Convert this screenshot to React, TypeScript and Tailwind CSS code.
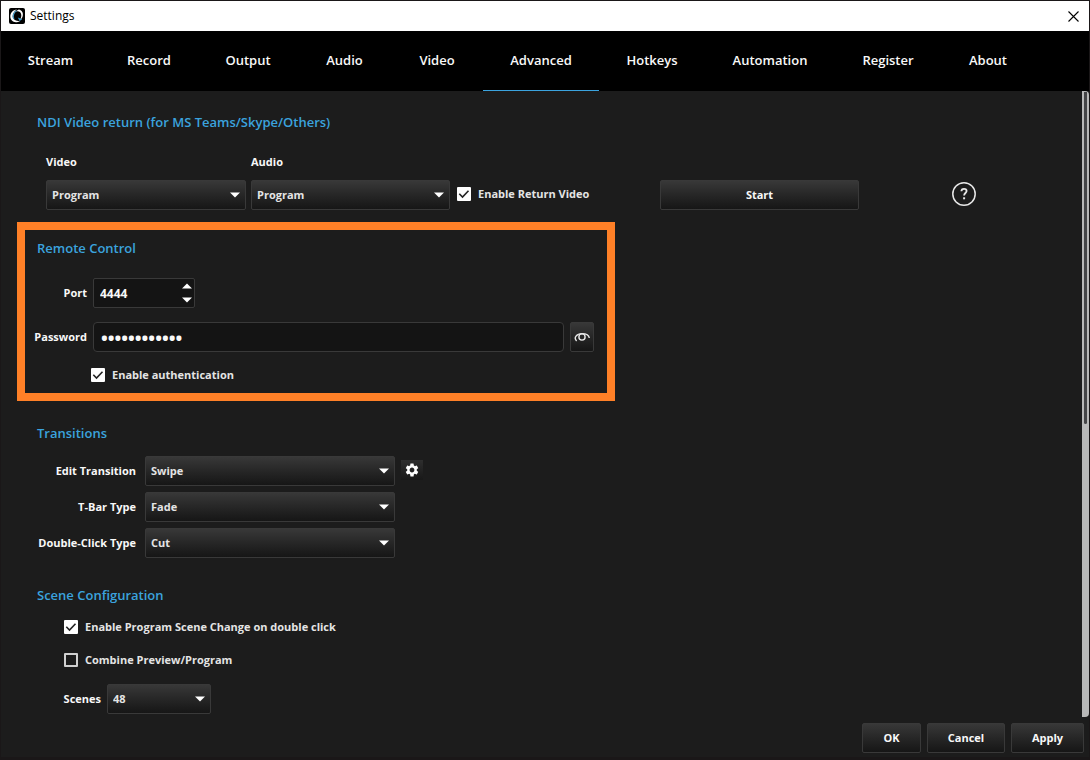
import { useState, type ReactNode } from 'react';
import { clsx } from 'clsx';

const TABS = [
  { name: 'Stream', width: 'w-[99px]' },
  { name: 'Record', width: 'w-[98px]' },
  { name: 'Output', width: 'w-[100px]' },
  { name: 'Audio', width: 'w-[93px]' },
  { name: 'Video', width: 'w-[92px]' },
  { name: 'Advanced', width: 'w-[116px]' },
  { name: 'Hotkeys', width: 'w-[106px]' },
  { name: 'Automation', width: 'w-[130px]' },
  { name: 'Register', width: 'w-[106px]' },
  { name: 'About', width: 'w-[94px]' },
];

const SOURCES = ['Program', 'Preview', 'Multiview'];
const TRANSITIONS = ['Cut', 'Fade', 'Swipe', 'Slide', 'Stinger'];

const RAISED =
  'rounded-xs border border-[#393939] bg-linear-to-b from-[#383838] to-[#161616] hover:border-[#555555]';

export default function App() {
  const [tab, setTab] = useState('Advanced');

  return (
    <div className="flex min-h-screen flex-col border border-b-3 border-[#1a1718] bg-[#1c1c1c] font-['Open_Sans',sans-serif] text-[11px] leading-4 font-bold text-[#f8f8f8]">
      <TitleBar />

      <nav className="flex h-15 bg-black" role="tablist">
        {TABS.map(({ name, width }) => (
          <button
            key={name}
            type="button"
            role="tab"
            aria-selected={tab === name}
            onClick={() => setTab(name)}
            className={clsx(
              'border-b pb-0.5 text-[13px] font-semibold',
              width,
              tab === name ? 'border-[#3ba3de]' : 'border-transparent'
            )}
          >
            {name}
          </button>
        ))}
      </nav>

      <div className="flex flex-1">
        <main className="flex-1 pl-4">
          <VideoReturn />
          <RemoteControl />
          <Transitions />
          <SceneConfiguration />
        </main>

        {/* Scrollbar */}
        <div className="flex w-[7px] flex-col items-center rounded-r bg-[#b8b8b8] pt-px">
          <div className="h-[332px] w-[3px] rounded-b-xs bg-[#444446]" />
        </div>
      </div>

      <footer className="flex justify-end gap-1.5 pt-1.5 pr-[5px] pb-1">
        <PushButton className="w-[59px]">OK</PushButton>
        <PushButton className="w-[78px]">Cancel</PushButton>
        <PushButton className="w-[73px]">Apply</PushButton>
      </footer>
    </div>
  );
}

function TitleBar() {
  return (
    <header className="flex h-[30px] items-center bg-white pr-2.5 pl-2 text-black">
      <svg viewBox="0 0 16 16" className="size-4" aria-hidden="true">
        <rect width="16" height="16" rx="2" fill="#000" />
        <path
          d="M9.800 1.500C13 2.200 14.600 5 13.700 8.200c-.5 1.800-1.500 3-2.900 3.900 1.100-2 1.900-4 1.300-6.200C11.500 3.600 9.300 2.700 7 3.600 8 2.600 8.900 1.900 9.800 1.500z"
          fill="#fff"
        />
        <path
          d="M8 1.500C4 1.700 1.200 4.800 1.300 8.600c.1 3.600 3 6.200 6.700 5.600 1.200-.2 2.200-.6 3.100-1.300-3 .4-5.600-.3-6.800-2.600C2.900 7.400 4.600 3.600 8 1.500z"
          fill="#fff"
        />
        <path d="M7.600 2.700C4.600 4.300 3.300 7.800 4.900 10.900" fill="none" stroke="#4c9cc4" strokeWidth="1.300" />
        <path d="M8.800 9.600l4.400 1.600-2.600 1.900z" fill="#3b9fd6" />
      </svg>
      <h1 className="ml-[5px] flex-1 text-xs font-normal">Settings</h1>
      <button type="button" aria-label="Close">
        <svg viewBox="0 0 11 11" className="size-[11px]" stroke="#000" strokeWidth="1.100">
          <path d="M.5.5l10 10M10.500.5l-10 10" />
        </svg>
      </button>
    </header>
  );
}

function VideoReturn() {
  return (
    <section className="pt-[21px] pl-5">
      <SectionTitle>NDI Video return (for MS Teams/Skype/Others)</SectionTitle>
      <div className="mt-5 flex items-end pl-[9px]">
        <div className="flex flex-col gap-2">
          <label htmlFor="return-video" className="leading-5">Video</label>
          <Select id="return-video" value="Program" options={SOURCES} className="w-[200px]" />
        </div>
        <div className="ml-[5px] flex flex-col gap-2">
          <label htmlFor="return-audio" className="leading-5">Audio</label>
          <Select id="return-audio" value="Program" options={SOURCES} className="w-[199px]" />
        </div>
        <div className="ml-[7px] flex h-8 w-[203px] items-center">
          <CheckBox id="return-enabled" defaultChecked>Enable Return Video</CheckBox>
        </div>
        <PushButton className="w-[199px]">Start</PushButton>
        <button type="button" aria-label="Help" className="mb-1 ml-[93px]">
          <svg viewBox="0 0 24 24" className="size-6" fill="none" stroke="#e8e8e8">
            <circle cx="12" cy="12" r="11.200" strokeWidth="1.500" />
            <path
              d="M9.400 9.300c0-1.500 1.100-2.500 2.600-2.500s2.600.9 2.600 2.300c0 1.900-2.500 2-2.500 4.400"
              strokeWidth="1.800"
            />
            <path d="M12.100 15.300v2" strokeWidth="2" />
          </svg>
        </button>
      </div>
    </section>
  );
}

function RemoteControl() {
  const [port, setPort] = useState(4444);
  const [visible, setVisible] = useState(false);

  return (
    <section className="mt-3 w-[598px] border-8 border-[#ff8027] pt-2 pb-2">
      <div className="pl-3">
        <SectionTitle>Remote Control</SectionTitle>
      </div>

      <div className="mt-5 flex items-center gap-1.5">
        <label htmlFor="port" className="w-[62px] text-right">Port</label>
        <div className="flex h-[30px] w-[102px] rounded-xs border border-[#393939] bg-[#141414]">
          <input
            id="port"
            inputMode="numeric"
            value={port}
            onChange={(e) => setPort(Number(e.target.value) || 0)}
            className="min-w-0 flex-1 pt-0.5 pl-1.5 text-xs outline-none"
          />
          <div className="flex flex-col justify-between px-0.5 py-1">
            <button type="button" aria-label="Increase port" onClick={() => setPort(port + 1)}>
              <Arrow className="rotate-180" />
            </button>
            <button type="button" aria-label="Decrease port" onClick={() => setPort(port - 1)}>
              <Arrow />
            </button>
          </div>
        </div>
      </div>

      <div className="mt-3.5 flex items-center gap-1.5">
        <label htmlFor="password" className="w-[62px] text-right">Password</label>
        <input
          id="password"
          type={visible ? 'text' : 'password'}
          defaultValue="vt-remote-01"
          className="h-[30px] w-[471px] rounded border border-[#393939] bg-[#141414] px-[7px] pt-0.5 text-lg outline-none"
        />
        <button
          type="button"
          aria-label="Show password"
          onClick={() => setVisible(!visible)}
          className={clsx('flex h-[30px] w-6 items-center justify-center', RAISED)}
        >
          <svg viewBox="0 0 16 10" className="h-2.5 w-4 shrink-0" fill="none" stroke="#e8e8e8" strokeWidth="1.400">
            <path d="M2.600 8.900C-.6 6 2.500 1.600 8 1.600c4.200 0 7 2 7.300 4.400" />
            <circle cx="8" cy="5" r="3.100" />
          </svg>
        </button>
      </div>

      <div className="mt-[13px] flex h-5 items-center pl-[66px]">
        <CheckBox id="auth" defaultChecked>Enable authentication</CheckBox>
      </div>
    </section>
  );
}

function Transitions() {
  return (
    <section className="pt-[22px] pl-5">
      <SectionTitle>Transitions</SectionTitle>
      <div className="mt-[13px] flex flex-col gap-1.5">
        <div className="flex">
          <TransitionRow id="edit" label="Edit Transition" value="Swipe" />
          <button
            type="button"
            aria-label="Transition settings"
            className="mt-1 ml-1.5 flex h-5 w-[22px] items-center justify-center bg-linear-to-b from-[#2e2e2e] to-[#181818]"
          >
            <svg viewBox="0 0 24 24" className="size-4" fill="#ffffff">
              <path d="M19.140 12.940c.04-.3.060-.61.060-.94 0-.32-.02-.64-.07-.94l2.030-1.580a.49.49 0 0 0 .12-.61l-1.920-3.320a.488.488 0 0 0-.59-.22l-2.390.96c-.5-.38-1.030-.7-1.620-.94l-.36-2.540a.484.484 0 0 0-.48-.41h-3.840c-.24 0-.43.17-.47.41l-.36 2.540c-.59.24-1.130.57-1.620.94l-2.390-.96c-.22-.08-.47 0-.59.22L2.740 8.870c-.12.21-.08.47.12.61l2.030 1.580c-.05.3-.09.63-.09.94s.02.64.07.94l-2.030 1.580a.49.49 0 0 0-.12.61l1.920 3.320c.12.22.37.29.59.22l2.390-.96c.5.38 1.030.7 1.620.94l.36 2.540c.05.24.24.41.48.41h3.840c.24 0 .44-.17.47-.41l.36-2.540c.59-.24 1.130-.56 1.620-.94l2.390.96c.22.08.47 0 .59-.22l1.920-3.320c.12-.22.07-.47-.12-.61l-2.010-1.580zM12 15.600c-1.980 0-3.600-1.620-3.600-3.600s1.620-3.600 3.600-3.600 3.600 1.620 3.600 3.600-1.620 3.600-3.600 3.600z" />
            </svg>
          </button>
        </div>
        <TransitionRow id="tbar" label="T-Bar Type" value="Fade" />
        <TransitionRow id="double-click" label="Double-Click Type" value="Cut" />
      </div>
    </section>
  );
}

function TransitionRow({ id, label, value }: { id: string; label: string; value: string }) {
  return (
    <div className="flex items-center gap-[9px]">
      <label htmlFor={id} className="w-[99px] text-right whitespace-nowrap">{label}</label>
      <Select id={id} value={value} options={TRANSITIONS} className="w-[250px]" />
    </div>
  );
}

function SceneConfiguration() {
  return (
    <section className="pt-[27px] pl-5">
      <SectionTitle>Scene Configuration</SectionTitle>
      <div className="mt-3 flex flex-col gap-[13px] pl-[27px]">
        <CheckBox id="scene-change" defaultChecked>Enable Program Scene Change on double click</CheckBox>
        <CheckBox id="combine">Combine Preview/Program</CheckBox>
      </div>
      <div className="mt-3.5 flex items-center gap-1.5">
        <label htmlFor="scenes" className="w-16 text-right">Scenes</label>
        <Select id="scenes" value="48" options={['12', '24', '36', '48']} className="w-[104px]" />
      </div>
    </section>
  );
}

function SectionTitle({ children }: { children: ReactNode }) {
  return <h2 className="text-[13px] leading-5 font-semibold text-[#3ba3de]">{children}</h2>;
}

interface SelectProps {
  id: string;
  value: string;
  options: string[];
  className: string;
}

function Select({ id, value, options, className }: SelectProps) {
  return (
    <div className={clsx('relative', className)}>
      <select
        id={id}
        defaultValue={value}
        className={clsx('h-[30px] w-full appearance-none pl-[5px] text-[#e4e4e4] outline-none', RAISED)}
      >
        {options.map((option) => (
          <option key={option} className="bg-[#1c1c1c]">{option}</option>
        ))}
      </select>
      <Arrow className="pointer-events-none absolute top-3 right-1.5" />
    </div>
  );
}

interface CheckBoxProps {
  id: string;
  defaultChecked?: boolean;
  children: ReactNode;
}

function CheckBox({ id, defaultChecked, children }: CheckBoxProps) {
  return (
    <div className="flex h-5 items-center gap-[7px] text-[#e4e4e4]">
      <span className="grid size-3.5 *:[grid-area:1/1]">
        <input
          id={id}
          type="checkbox"
          defaultChecked={defaultChecked}
          className="peer size-3.5 appearance-none rounded-[1px] border-2 border-[#d0d0d0] checked:border-white checked:bg-white"
        />
        <svg
          viewBox="0 0 14 14"
          className="pointer-events-none invisible size-3.5 peer-checked:visible"
          fill="none"
          stroke="#222222"
          strokeWidth="1.600"
        >
          <path d="M2.300 6.800l3.200 3.200 6-6.300" />
        </svg>
      </span>
      <label htmlFor={id}>{children}</label>
    </div>
  );
}

function PushButton({ className, children }: { className: string; children: ReactNode }) {
  return (
    <button type="button" className={clsx('h-[30px]', RAISED, className)}>
      {children}
    </button>
  );
}

function Arrow({ className }: { className?: string }) {
  return (
    <svg viewBox="0 0 10 6" className={clsx('h-1.5 w-2.5', className)} fill="#ffffff" aria-hidden="true">
      <path d="M0 .5h10L5 5.500z" />
    </svg>
  );
}
